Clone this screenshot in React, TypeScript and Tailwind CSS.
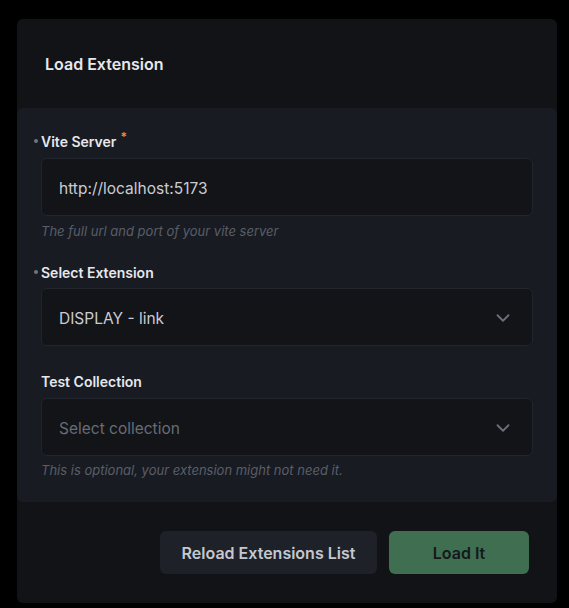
import { ChevronDown } from 'lucide-react';

const Label = ({ text, dot, required }: { text: string; dot?: boolean; required?: boolean }) => (
    <div className="relative flex h-5 items-center text-[14px] font-semibold text-[#e6e8ec]">
        {dot && <span className="absolute -left-[7px] top-[8px] h-[4px] w-[4px] rounded-full bg-[#70747e]" />}
        {text}
        {required && <span className="ml-[4px] -mt-[9px] text-[12px] text-[#f28b35]">*</span>}
    </div>
);

const SelectBox = ({ value, placeholder }: { value?: string; placeholder?: string }) => (
    <div className="flex h-[58px] items-center justify-between rounded-md border border-[#22252c] bg-[#131418] pl-[17px] pr-[18px] text-[15.5px]">
        {value ? (
            <span className="pt-[4px] text-[#c9ccd3]">{value}</span>
        ) : (
            <span className="pt-[4px] text-[#686c75]">{placeholder}</span>
        )}
        <ChevronDown size={22} strokeWidth={2} className="mt-[2px] text-[#6b6f78]" />
    </div>
);

const App = () => {
    return (
        <div className="min-h-screen bg-black pl-[17px] pt-[19px] font-['Inter',sans-serif]">
            <div className="flex h-[584px] w-[540px] flex-col rounded-md bg-[#121317]">

                {/* Header */}
                <div className="flex h-[89px] items-center px-7 text-[16px] font-semibold text-[#e6e8ec]">
                    Load Extension
                </div>

                {/* Form */}
                <div className="rounded-md bg-[#181b22] px-6 pb-[23px] pt-[23px]">
                    <Label text="Vite Server" dot required />
                    <div className="mt-[7px] flex h-[58px] items-center rounded-md border border-[#22252c] bg-[#131418] px-[17px] pt-[4px] text-[15.5px] text-[#c9ccd3]">
                        http://localhost:5173
                    </div>
                    <p className="mt-[6px] text-[13px] italic leading-[18px] text-[#5a5e67]">
                        The full url and port of your vite server
                    </p>

                    <div className="mt-[22px]">
                        <Label text="Select Extension" dot />
                    </div>
                    <div className="mt-[6px]">
                        <SelectBox value="DISPLAY - link" />
                    </div>

                    <div className="mt-[25px]">
                        <Label text="Test Collection" />
                    </div>
                    <div className="mt-[7px]">
                        <SelectBox placeholder="Select collection" />
                    </div>
                    <p className="mt-[5px] text-[13px] italic leading-[18px] text-[#5a5e67]">
                        This is optional, your extension might not need it.
                    </p>
                </div>

                {/* Footer */}
                <div className="flex justify-end gap-3 pr-7 pt-[29px]">
                    <button className="h-[43px] w-[217px] rounded-md bg-[#1f2129] pt-[1px] text-[16px] font-semibold text-[#c4c8d0]">
                        Reload Extensions List
                    </button>
                    <button className="h-[43px] w-[140px] rounded-md bg-[#3f6e50] pt-[1px] text-[16px] font-semibold text-[#15181c]">
                        Load It
                    </button>
                </div>
            </div>
        </div>
    );
};

export default App;
